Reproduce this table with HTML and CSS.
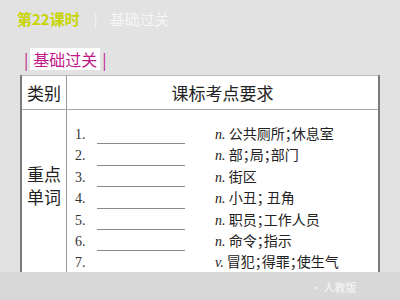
FILE: index.html
```html
<!DOCTYPE html>
<html>
<head>
<meta charset="utf-8">
<link rel="stylesheet" href="styles.css">
</head>
<body>
<div class="topbar">
  <span class="lesson">第22课时</span>
  <span class="sep">|</span>
  <span class="topic">基础过关</span>
</div>
<div class="section">
  <span class="bar">|</span><span class="label">基础过关</span><span class="bar">|</span>
</div>
<table class="sheet">
  <tr class="head">
    <th class="cat">类别</th>
    <th class="req">课标考点要求</th>
  </tr>
  <tr class="body">
    <td class="cat-cell"><div class="cat-name">重点<br>单词</div></td>
    <td class="items-cell">
      <div class="items">
        <div class="item"><span class="num">1.</span><span class="blank"></span><span class="def"><i>n.</i> 公共厕所；休息室</span></div>
        <div class="item"><span class="num">2.</span><span class="blank"></span><span class="def"><i>n.</i> 部；局；部门</span></div>
        <div class="item"><span class="num">3.</span><span class="blank"></span><span class="def"><i>n.</i> 街区</span></div>
        <div class="item"><span class="num">4.</span><span class="blank"></span><span class="def"><i>n.</i> 小丑； 丑角</span></div>
        <div class="item"><span class="num">5.</span><span class="blank"></span><span class="def"><i>n.</i> 职员；工作人员</span></div>
        <div class="item"><span class="num">6.</span><span class="blank"></span><span class="def"><i>n.</i> 命令；指示</span></div>
        <div class="item"><span class="num">7.</span><span class="blank"></span><span class="def"><i>v.</i> 冒犯；得罪；使生气</span></div>
        <div class="item"><span class="num">8.</span><span class="blank"></span><span class="def"><i>n.</i> 表演者</span></div>
      </div>
    </td>
  </tr>
</table>
<div class="footer"><span class="edition">· 人教版</span></div>
</body>
</html>
```
FILE: styles.css
```css
html, body {
  margin: 0;
  padding: 0;
}
body {
  width: 400px;
  height: 300px;
  overflow: hidden;
  position: relative;
  background: #e2e2e2;
  font-family: "Noto Sans CJK SC", "Noto Sans", sans-serif;
}
.topbar {
  display: flex;
  align-items: center;
  height: 20px;
  padding: 9px 0 0 17px;
  font-size: 15px;
  line-height: 20px;
}
.lesson {
  color: #c8d400;
  font-weight: bold;
}
.sep {
  color: #f4f4f4;
  margin: 0 12px 0 14px;
  font-size: 14px;
}
.topic {
  color: #f6f6f6;
}
.section {
  display: flex;
  align-items: center;
  margin: 18px 0 0 24px;
  height: 24px;
  font-size: 16px;
  color: #c0188a;
}
.bar {
  font-size: 16px;
  line-height: 22px;
}
.label {
  background: #fff;
  padding: 0 3px;
  margin: 0 2px;
  line-height: 22px;
}
.sheet {
  margin: 4px 0 0 20px;
  width: 360px;
  border-collapse: collapse;
  background: #fff;
  border-top: 1px solid #bbb;
  border-left: 2px solid #7a7a7a;
  border-right: 2px solid #7a7a7a;
}
.head th {
  height: 33px;
  padding: 0;
  font-weight: normal;
  font-size: 17px;
  color: #222;
  border-bottom: 1px solid #aaa;
}
.cat {
  width: 44px;
  border-right: 1px solid #9a9a9a;
}
.cat-cell {
  vertical-align: top;
  padding: 0;
  border-right: 1px solid #9a9a9a;
}
.cat-name {
  padding-top: 52px;
  text-align: center;
  font-size: 17px;
  line-height: 23px;
  color: #222;
}
.items-cell {
  padding: 14px 0 0 8px;
  vertical-align: top;
}
.item {
  display: flex;
  align-items: flex-end;
  height: 21.4px;
  line-height: 21.4px;
}
.num {
  width: 22px;
  font-family: "Liberation Serif", serif;
  font-size: 14px;
  color: #333;
}
.blank {
  width: 88px;
  height: 1px;
  background: #8a8a8a;
  align-self: flex-end;
  position: relative;
  top: -1px;
}
.def {
  margin-left: 30px;
  font-size: 14px;
  color: #222;
  font-feature-settings: "halt";
}
.def i {
  font-family: "Liberation Serif", serif;
  font-size: 14px;
}
.footer {
  position: absolute;
  left: 0;
  top: 272px;
  width: 400px;
  height: 28px;
  background: #d8d8d8;
}
.edition {
  position: absolute;
  left: 310px;
  top: 7px;
  font-size: 11px;
  color: #f8f8f8;
}
```
